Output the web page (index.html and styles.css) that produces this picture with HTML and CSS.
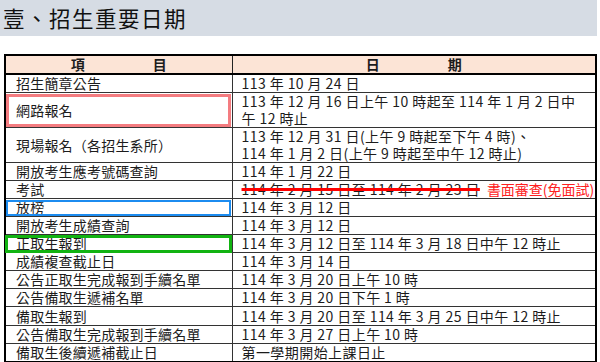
FILE: index.html
```html
<!DOCTYPE html>
<html lang="zh-Hant">
<head>
<meta charset="utf-8">
<title>招生重要日期</title>
<link rel="stylesheet" href="styles.css">
</head>
<body>
<h1 class="title">壹、招生重要日期</h1>
<table class="schedule">
  <colgroup><col class="c-item"><col class="c-date"></colgroup>
  <thead>
    <tr class="head">
      <th><span class="hd"><span>項</span><span>目</span></span></th>
      <th><span class="hd"><span>日</span><span>期</span></span></th>
    </tr>
  </thead>
  <tbody>
    <tr><td class="item">招生簡章公告</td><td class="date">113 年 10 月 24 日</td></tr>
    <tr class="tall"><td class="item box-pink">網路報名</td><td class="date"><span class="ln">113 年 12 月 16 日上午 10 時起至 114 年 1 月 2 日中</span><span class="ln">午 12 時止</span></td></tr>
    <tr class="tall"><td class="item">現場報名（各招生系所）</td><td class="date"><span class="ln">113 年 12 月 31 日(上午 9 時起至下午 4 時)、</span><span class="ln">114 年 1 月 2 日(上午 9 時起至中午 12 時止)</span></td></tr>
    <tr><td class="item">開放考生應考號碼查詢</td><td class="date">114 年 1 月 22 日</td></tr>
    <tr class="short"><td class="item">考試</td><td class="date"><span class="struck">114 年 2 月 15 日至 114 年 2 月 23 日</span><span class="note">書面審查(免面試)</span></td></tr>
    <tr><td class="item box-blue">放榜</td><td class="date">114 年 3 月 12 日</td></tr>
    <tr class="short"><td class="item">開放考生成績查詢</td><td class="date">114 年 3 月 12 日</td></tr>
    <tr><td class="item box-green">正取生報到</td><td class="date">114 年 3 月 12 日至 114 年 3 月 18 日中午 12 時止</td></tr>
    <tr class="short"><td class="item">成績複查截止日</td><td class="date">114 年 3 月 14 日</td></tr>
    <tr><td class="item">公告正取生完成報到手續名單</td><td class="date">114 年 3 月 20 日上午 10 時</td></tr>
    <tr><td class="item">公告備取生遞補名單</td><td class="date">114 年 3 月 20 日下午 1 時</td></tr>
    <tr class="mid"><td class="item">備取生報到</td><td class="date">114 年 3 月 20 日至 114 年 3 月 25 日中午 12 時止</td></tr>
    <tr class="short"><td class="item">公告備取生完成報到手續名單</td><td class="date">114 年 3 月 27 日上午 10 時</td></tr>
    <tr class="short"><td class="item">備取生後續遞補截止日</td><td class="date">第一學期開始上課日止</td></tr>
  </tbody>
</table>
</body>
</html>
```
FILE: styles.css
```css
html, body {
  margin: 0;
  padding: 0;
  background: #ffffff;
}
body {
  font-family: "Noto Sans CJK TC", "Noto Sans", sans-serif;
  color: #1c1c1c;
}
.title {
  margin: 0 3px 0 0;
  height: 36px;
  background: #d6dce4;
  font-size: 21.5px;
  font-weight: 400;
  letter-spacing: 1.5px;
  line-height: 36px;
  padding-left: 3px;
  color: #111;
}
.schedule {
  margin: 18px 3px 0 4px;
  width: 593px;
  border-collapse: collapse;
  border: 2px solid #000;
  font-size: 14px;
  letter-spacing: 0.2px;
  line-height: 17px;
}
.c-item { width: 229px; }
.c-date { width: 364px; }
.schedule th {
  background: #fce4d6;
  font-weight: 700;
  font-size: 14px;
  line-height: 17px;
  height: 17px;
  padding: 0;
  border: 1px solid #222;
  border-bottom: 2px solid #000;
  text-align: center;
}
.hd {
  display: inline-flex;
  gap: 68px;
  letter-spacing: 0;
}
.schedule td {
  border: 1px solid #333;
  padding: 0 0 0 9px;
  height: 17px;
  vertical-align: middle;
  white-space: nowrap;
}
.schedule td.item { padding-left: 10px; }
.schedule td.date { letter-spacing: 0.42px; }
.ln {
  display: block;
  height: 17px;
}
.schedule tr.short td { height: 16px; }
.schedule tr.mid td { height: 18px; }
.schedule tr.tall td { height: 34px; }
.box-pink {
  outline: 3px solid #f47c80;
  outline-offset: -4px;
}
.box-blue {
  outline: 2px solid #1c8cf0;
  outline-offset: -3px;
}
.box-green {
  outline: 3px solid #12b312;
  outline-offset: -3px;
}
.struck {
  text-decoration: line-through;
  text-decoration-color: #ff0000;
  text-decoration-thickness: 3px;
}
.note {
  color: #ff2020;
  margin-left: 7px;
  letter-spacing: 0;
}
```
